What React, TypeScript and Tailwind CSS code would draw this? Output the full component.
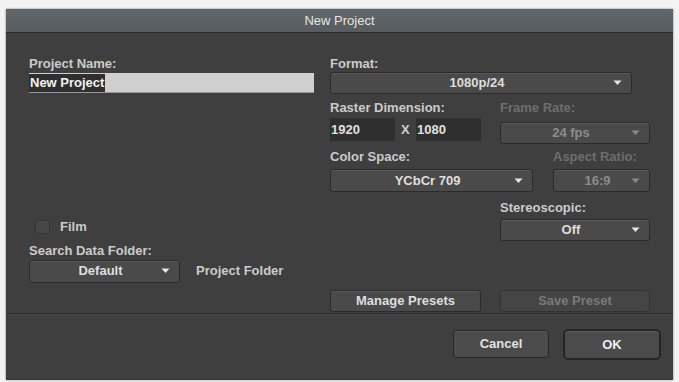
const font = { fontFamily: '"Liberation Sans", Arial, sans-serif' };

function Caret({ dim = false }: { dim?: boolean }) {
  return (
    <svg width="9" height="6" viewBox="0 0 9 6" className="absolute right-[9px] top-1/2 -translate-y-1/2">
      <path d="M0.5 0.5 L8.5 0.5 L4.5 5 Z" fill={dim ? "#8a8a8a" : "#e6e6e6"} />
    </svg>
  );
}

function Select({ value, className = "", dim = false }: { value: string; className?: string; dim?: boolean }) {
  return (
    <div
      className={`relative flex items-center justify-center rounded-[3px] border border-[#2b2b2b] bg-[#4a4a4a] shadow-[inset_0_1px_0_#5a5a5a] text-[13px] font-bold ${
        dim ? "text-[#8c8c8c]" : "text-[#dedede]"
      } ${className}`}
    >
      <span className="pr-2">{value}</span>
      <Caret dim={dim} />
    </div>
  );
}

function Label({ children, dim = false, className = "" }: { children: React.ReactNode; dim?: boolean; className?: string }) {
  return (
    <div className={`text-[13px] font-bold leading-[15px] ${dim ? "text-[#6e6e6e]" : "text-[#cbcbcb]"} ${className}`}>
      {children}
    </div>
  );
}

export default function App() {
  return (
    <div className="h-[382px] w-[679px] bg-[#f3f3f3] pl-[6px] pt-[9px]" style={font}>
      <div className="flex h-[371px] w-[667px] flex-col bg-[#3f3f3f] shadow-[0_0_2px_rgba(0,0,0,0.5)]">
        {/* title bar */}
        <div className="flex h-[24px] items-center justify-center border-b border-[#2a2a2a] bg-gradient-to-b from-[#61676a] to-[#565c5f] text-[13px] text-[#e4e4e4]">
          New Project
        </div>

        {/* body */}
        <div className="flex h-[280px] px-[23px] pt-[23px]">
          {/* left column */}
          <div className="flex w-[285px] flex-col">
            <Label>Project Name:</Label>
            <div className="mt-[2px] flex h-[20px] items-center bg-[#cfcfcf] shadow-[inset_0_-1px_0_#9a9a9a]">
              <span className="bg-[#2f2f2f] px-[1px] text-[13px] font-bold leading-[18px] text-[#f2f2f2]">New Project</span>
            </div>

            <div className="mt-[124px] flex items-center pl-[6px]">
              <div className="h-[14px] w-[15px] rounded-[2px] border border-[#353535] bg-[#474747]" />
              <span className="ml-[10px] text-[13px] font-bold text-[#cbcbcb]">Film</span>
            </div>
            <Label className="mt-[6px]">Search Data Folder:</Label>
            <div className="mt-[2px] flex items-center">
              <Select value="Default" className="h-[23px] w-[151px]" />
              <span className="ml-[16px] text-[13px] font-bold text-[#cbcbcb]">Project Folder</span>
            </div>
          </div>

          {/* right column */}
          <div className="ml-[16px] flex w-[320px] flex-col">
            <Label>Format:</Label>
            <Select value="1080p/24" className="mt-[1px] h-[22px] w-[302px]" />

            <div className="mt-[6px] flex">
              <div className="flex w-[170px] flex-col">
                <Label>Raster Dimension:</Label>
                <div className="mt-[3px] flex items-center">
                  <div className="flex h-[23px] w-[65px] items-center bg-[#2f2f2f] pl-[1px] text-[13px] font-bold text-[#e0e0e0]">1920</div>
                  <span className="ml-[6px] w-[15px] text-[13px] font-bold text-[#cfcfcf]">X</span>
                  <div className="flex h-[23px] w-[65px] items-center bg-[#2f2f2f] pl-[1px] text-[13px] font-bold text-[#e0e0e0]">1080</div>
                </div>
              </div>
              <div className="flex w-[150px] flex-col">
                <Label dim>Frame Rate:</Label>
                <Select value="24 fps" dim className="mt-[7px] h-[22px] w-[150px]" />
              </div>
            </div>

            <div className="mt-[5px] flex">
              <div className="flex w-[223px] flex-col">
                <Label>Color Space:</Label>
                <Select value="YCbCr 709" className="mt-[5px] h-[23px] w-[203px]" />
              </div>
              <div className="flex w-[97px] flex-col">
                <Label dim>Aspect Ratio:</Label>
                <Select value="16:9" dim className="mt-[5px] h-[23px] w-[97px]" />
              </div>
            </div>

            <div className="ml-[170px] mt-[8px] flex flex-col">
              <Label>Stereoscopic:</Label>
              <Select value="Off" className="mt-[4px] h-[22px] w-[150px]" />
            </div>

            <div className="mt-[49px] flex gap-[19px]">
              <div className="flex h-[22px] w-[151px] items-center justify-center rounded-[3px] border border-[#2b2b2b] bg-[#4a4a4a] shadow-[inset_0_1px_0_#5a5a5a] text-[13px] font-bold text-[#dedede]">
                Manage Presets
              </div>
              <div className="flex h-[22px] w-[150px] items-center justify-center rounded-[3px] border border-[#333333] bg-[#454545] text-[13px] font-bold text-[#7a7a7a]">
                Save Preset
              </div>
            </div>
          </div>
        </div>

        {/* footer */}
        <div className="flex flex-1 items-start justify-end border-t border-[#2c2c2c] pr-[12px] pt-[15px] shadow-[inset_0_1px_0_#474747]">
          <div className="mt-[1px] flex h-[28px] w-[96px] items-center justify-center rounded-[4px] border border-[#262626] bg-[#4b4b4b] shadow-[inset_0_1px_0_#5c5c5c] text-[13px] font-bold text-[#e2e2e2]">
            Cancel
          </div>
          <div className="ml-[14px] flex h-[31px] w-[98px] items-center justify-center rounded-[5px] border-2 border-[#262626] bg-[#4b4b4b] shadow-[inset_0_1px_0_#5c5c5c] text-[13px] font-bold text-[#eeeeee]">
            OK
          </div>
        </div>
      </div>
    </div>
  );
}
